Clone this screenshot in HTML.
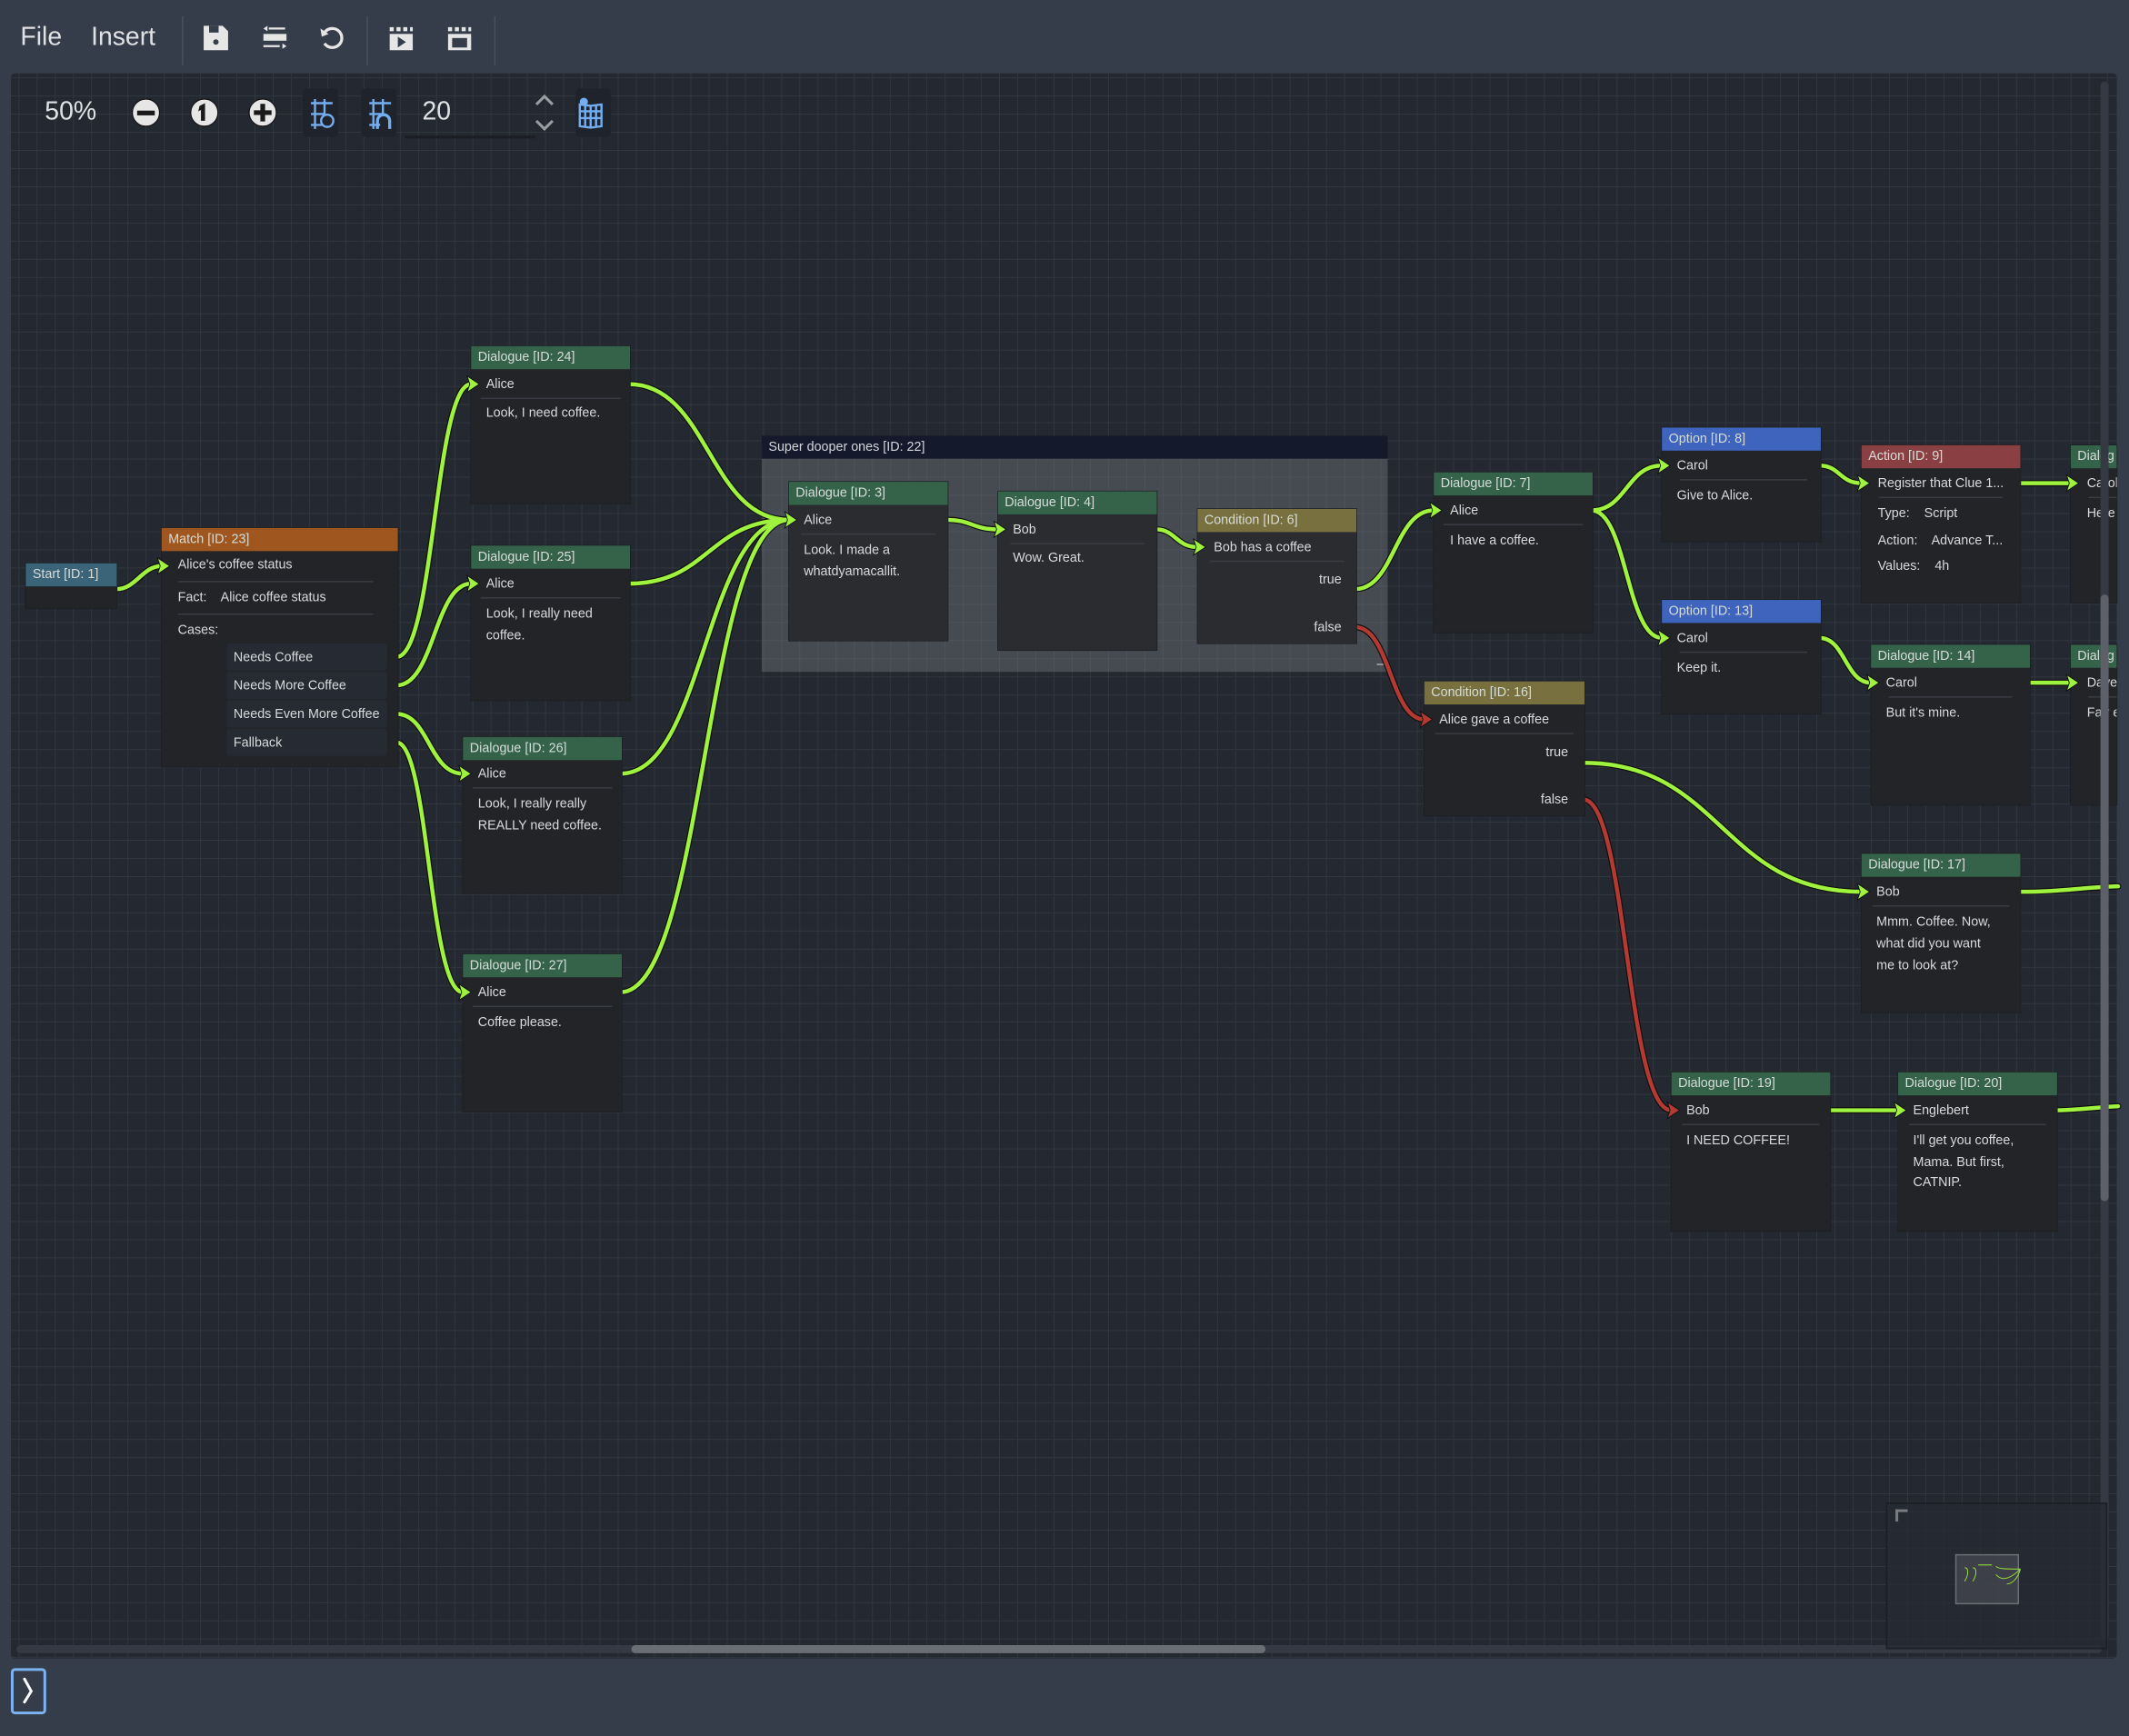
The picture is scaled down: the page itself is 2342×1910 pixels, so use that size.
<!DOCTYPE html>
<html><head><meta charset="utf-8">
<style>
*{margin:0;padding:0;box-sizing:border-box}
html,body{width:2342px;height:1910px;overflow:hidden;background:#363d4a}
#w{position:absolute;left:0;top:0;width:1568px;height:1279px;transform:scale(1.49362,1.49335);transform-origin:0 0;font-family:"Liberation Sans",sans-serif;color:#d4d6d8}
.tb{position:absolute;font-size:19px;color:#dfe1e4;top:17px}
#cv{position:absolute;left:8px;top:54px;width:1551px;height:1168px;border-radius:3px;overflow:hidden;background-color:#242830;
background-image:linear-gradient(#31363f 0.7px,transparent 0.7px),linear-gradient(90deg,#31363f 0.7px,transparent 0.7px);
background-size:13.39px 13.39px;background-position:5.6px 3px}
.n{position:absolute;background:#222428;box-shadow:0 0 0 0.5px #1c1e22}
.h{position:absolute;left:0;top:0;right:0;height:16.5px;font-size:9.6px;line-height:17.5px;padding-left:5px;color:#d6dcd8;white-space:nowrap;overflow:hidden}
.g{background:#35634a}
.t{position:absolute;font-size:9.6px;line-height:15px;white-space:nowrap;color:#d8dadc}
.s{position:absolute;height:0.8px;background:#393c42}
.cb{position:absolute;left:48px;width:118px;height:20px;background:#262a33;border-radius:2px}
svg{position:absolute;left:0;top:0}
</style></head><body><div id="w">
<div class="tb" style="left:15px">File</div>
<div class="tb" style="left:67px">Insert</div>
<svg width="1568" height="60" style="left:0;top:0">
<rect x="134" y="12" width="1" height="36" fill="#4a515e"/>
<g fill="#e6e6e6">
<path d="M150 19h14l4 4v14h-18z"/><rect x="154" y="19" width="7" height="5" fill="#363d4a"/><circle cx="159" cy="31" r="2" fill="#363d4a"/>
<rect x="194" y="25" width="17" height="5"/><path d="M198 21h12M194 34h12" stroke="#e6e6e6" stroke-width="1.5"/><path d="M194 21l3-2v4zM211 34l-3-2v4z"/>
</g>
<path d="M239 24a7 7 0 1 1 0 8" stroke="#e6e6e6" stroke-width="2.2" fill="none"/><path d="M236 21l1 6 5-2z" fill="#e6e6e6"/>
<rect x="270" y="12" width="1" height="36" fill="#4a515e"/>
<g fill="#e6e6e6"><rect x="287" y="25" width="17" height="12"/><path d="M287 20h3v3h-3zM292 20h3v3h-3zM297 20h3v3h-3zM302 20h2v3h-2z"/><path d="M293 27v8l6-4z" fill="#363d4a"/>
<rect x="330" y="25" width="17" height="12"/><path d="M330 20h3v3h-3zM335 20h3v3h-3zM340 20h3v3h-3zM345 20h2v3h-2z"/><rect x="333" y="28" width="11" height="7" fill="#363d4a"/></g>
<rect x="364" y="12" width="1" height="36" fill="#4a515e"/>
</svg>
<div id="cv">
<div style="position:absolute;left:553px;top:267px;width:461px;height:17px;background:#141a2b;font-size:9.6px;line-height:18px;padding-left:5px;color:#d4d6dc">Super dooper ones [ID: 22]</div>
<div style="position:absolute;left:553px;top:284px;width:461px;height:157px;background:rgba(120,122,128,0.42)"></div>
<div style="position:absolute;left:1006px;top:430px;width:6px;height:6px;border-right:1px solid #aaa;border-bottom:1px solid #aaa"></div>
</div>
<svg width="1568" height="1279">
<g fill="none" stroke-linecap="round">
<g stroke="#101010" stroke-width="4.6">
<path d="M86 434 C100 434,105 417,119 417"/>
<path d="M292 484 C320 484,320 283,347 283"/>
<path d="M292 505 C320 505,320 430,347 430"/>
<path d="M292 526 C316 526,316 570,341 570"/>
<path d="M292 547 C316 547,316 731,341 731"/>
<path d="M463 283 C522 283,522 383,581 383"/>
<path d="M463 430 C522 430,522 383,581 383"/>
<path d="M457 570 C519 570,519 383,581 383"/>
<path d="M457 731 C519 731,519 383,581 383"/>
<path d="M697 383 C716 383,716 390,735 390"/>
<path d="M851 390 C866 390,866 403,882 403"/>
<path d="M998 434 C1027 434,1027 376,1056 376"/>
<path d="M1172 376 C1198 376,1198 343,1224 343"/>
<path d="M1172 376 C1198 376,1198 470,1224 470"/>
<path d="M1340 343 C1355 343,1355 356,1371 356"/>
<path d="M1487 356 L1525 356"/>
<path d="M1340 470 C1359 470,1359 503,1378 503"/>
<path d="M1494 503 L1525 503"/>
<path d="M1166 562 C1268 562,1268 657,1371 657"/>
<path d="M1487 657 C1520 657,1530 654,1560 653"/>
<path d="M1347 818 L1398 818"/>
<path d="M1514 818 C1530 818,1540 816,1560 815"/>
<path d="M998 462 C1024 462,1024 530,1049 530"/>
<path d="M1166 589 C1198 589,1198 818,1231 818"/>
</g>
<g stroke="#9ff23d" stroke-width="3">
<path d="M86 434 C100 434,105 417,119 417"/>
<path d="M292 484 C320 484,320 283,347 283"/>
<path d="M292 505 C320 505,320 430,347 430"/>
<path d="M292 526 C316 526,316 570,341 570"/>
<path d="M292 547 C316 547,316 731,341 731"/>
<path d="M463 283 C522 283,522 383,581 383"/>
<path d="M463 430 C522 430,522 383,581 383"/>
<path d="M457 570 C519 570,519 383,581 383"/>
<path d="M457 731 C519 731,519 383,581 383"/>
<path d="M697 383 C716 383,716 390,735 390"/>
<path d="M851 390 C866 390,866 403,882 403"/>
<path d="M998 434 C1027 434,1027 376,1056 376"/>
<path d="M1172 376 C1198 376,1198 343,1224 343"/>
<path d="M1172 376 C1198 376,1198 470,1224 470"/>
<path d="M1340 343 C1355 343,1355 356,1371 356"/>
<path d="M1487 356 L1525 356"/>
<path d="M1340 470 C1359 470,1359 503,1378 503"/>
<path d="M1494 503 L1525 503"/>
<path d="M1166 562 C1268 562,1268 657,1371 657"/>
<path d="M1487 657 C1520 657,1530 654,1560 653"/>
<path d="M1347 818 L1398 818"/>
<path d="M1514 818 C1530 818,1540 816,1560 815"/>
</g>
<g stroke="#b23a32" stroke-width="3">
<path d="M998 462 C1024 462,1024 530,1049 530"/>
<path d="M1166 589 C1198 589,1198 818,1231 818"/>
</g>
</g>
</svg>
<div class="n" style="left:19px;top:415px;width:67px;height:33px"><div class="h" style="background:#3b6479">Start [ID: 1]</div></div>

<div class="n" style="left:119px;top:389px;width:174px;height:176px"><div class="h" style="background:#a0571f">Match [ID: 23]</div>
<div class="t" style="left:12px;top:20px">Alice's coffee status</div><div class="s" style="left:12px;right:18px;top:39px"></div>
<div class="t" style="left:12px;top:44px">Fact:&nbsp;&nbsp;&nbsp; Alice coffee status</div><div class="s" style="left:12px;right:18px;top:63px"></div>
<div class="t" style="left:12px;top:68px">Cases:</div>
<div class="cb" style="top:85px"></div><div class="cb" style="top:106px"></div><div class="cb" style="top:127px"></div><div class="cb" style="top:148px"></div>
<div class="t" style="left:53px;top:88px">Needs Coffee</div><div class="t" style="left:53px;top:109px">Needs More Coffee</div><div class="t" style="left:53px;top:130px">Needs Even More Coffee</div><div class="t" style="left:53px;top:151px">Fallback</div>
</div>

<div class="n" style="left:347px;top:255px;width:117px;height:116px"><div class="h g">Dialogue [ID: 24]</div><div class="t" style="left:11px;top:21px">Alice</div><div class="s" style="left:7px;right:7px;top:38px"></div><div class="t" style="left:11px;top:42px">Look, I need coffee.</div></div>
<div class="n" style="left:347px;top:402px;width:117px;height:114px"><div class="h g">Dialogue [ID: 25]</div><div class="t" style="left:11px;top:21px">Alice</div><div class="s" style="left:7px;right:7px;top:38px"></div><div class="t" style="left:11px;top:43px;line-height:15.5px">Look, I really need<br>coffee.</div></div>
<div class="n" style="left:341px;top:543px;width:117px;height:115px"><div class="h g">Dialogue [ID: 26]</div><div class="t" style="left:11px;top:20px">Alice</div><div class="s" style="left:7px;right:7px;top:37px"></div><div class="t" style="left:11px;top:42px;line-height:15.5px">Look, I really really<br>REALLY need coffee.</div></div>
<div class="n" style="left:341px;top:703px;width:117px;height:116px"><div class="h g">Dialogue [ID: 27]</div><div class="t" style="left:11px;top:21px">Alice</div><div class="s" style="left:7px;right:7px;top:38px"></div><div class="t" style="left:11px;top:43px">Coffee please.</div></div>

<div class="n" style="left:581px;top:355px;width:117px;height:117px;background:#2a2c30"><div class="h g">Dialogue [ID: 3]</div><div class="t" style="left:11px;top:21px">Alice</div><div class="s" style="left:9px;right:9px;top:38px"></div><div class="t" style="left:11px;top:43px;line-height:15.5px">Look. I made a<br>whatdyamacallit.</div></div>
<div class="n" style="left:735px;top:362px;width:117px;height:117px;background:#2a2c30"><div class="h g">Dialogue [ID: 4]</div><div class="t" style="left:11px;top:21px">Bob</div><div class="s" style="left:9px;right:9px;top:38px"></div><div class="t" style="left:11px;top:42px">Wow. Great.</div></div>
<div class="n" style="left:882px;top:375px;width:117px;height:99px;background:#2a2c30"><div class="h" style="background:#78713f">Condition [ID: 6]</div><div class="t" style="left:12px;top:21px">Bob has a coffee</div><div class="s" style="left:9px;right:9px;top:38px"></div><div class="t" style="right:11px;top:45px">true</div><div class="t" style="right:11px;top:80px">false</div></div>

<div class="n" style="left:1056px;top:348px;width:117px;height:118px"><div class="h g">Dialogue [ID: 7]</div><div class="t" style="left:12px;top:21px">Alice</div><div class="s" style="left:7px;right:7px;top:38px"></div><div class="t" style="left:12px;top:43px">I have a coffee.</div></div>
<div class="n" style="left:1049px;top:502px;width:118px;height:99px"><div class="h" style="background:#78713f">Condition [ID: 16]</div><div class="t" style="left:11px;top:21px">Alice gave a coffee</div><div class="s" style="left:8px;right:8px;top:38px"></div><div class="t" style="right:12px;top:45px">true</div><div class="t" style="right:12px;top:80px">false</div></div>

<div class="n" style="left:1224px;top:315px;width:117px;height:84px"><div class="h" style="background:#3f64bd">Option [ID: 8]</div><div class="t" style="left:11px;top:21px">Carol</div><div class="s" style="left:13px;right:10px;top:38px"></div><div class="t" style="left:11px;top:43px">Give to Alice.</div></div>
<div class="n" style="left:1224px;top:442px;width:117px;height:84px"><div class="h" style="background:#3f64bd">Option [ID: 13]</div><div class="t" style="left:11px;top:21px">Carol</div><div class="s" style="left:13px;right:10px;top:38px"></div><div class="t" style="left:11px;top:43px">Keep it.</div></div>
<div class="n" style="left:1371px;top:328px;width:117px;height:116px"><div class="h" style="background:#8a4042">Action [ID: 9]</div><div class="t" style="left:12px;top:21px">Register that Clue 1...</div><div class="s" style="left:13px;right:13px;top:38px"></div><div class="t" style="left:12px;top:43px">Type:&nbsp;&nbsp;&nbsp; Script</div><div class="t" style="left:12px;top:63px">Action:&nbsp;&nbsp;&nbsp; Advance T...</div><div class="t" style="left:12px;top:82px">Values:&nbsp;&nbsp;&nbsp; 4h</div></div>
<div class="n" style="left:1525px;top:328px;width:34px;height:116px;overflow:hidden"><div class="h g">Dialog</div><div class="t" style="left:12px;top:21px">Carol</div><div class="s" style="left:13px;right:0;top:38px"></div><div class="t" style="left:12px;top:43px">Here</div></div>
<div class="n" style="left:1378px;top:475px;width:117px;height:118px"><div class="h g">Dialogue [ID: 14]</div><div class="t" style="left:11px;top:21px">Carol</div><div class="s" style="left:13px;right:13px;top:38px"></div><div class="t" style="left:11px;top:43px">But it's mine.</div></div>
<div class="n" style="left:1525px;top:475px;width:34px;height:118px;overflow:hidden"><div class="h g">Dialog</div><div class="t" style="left:12px;top:21px">Dave</div><div class="s" style="left:13px;right:0;top:38px"></div><div class="t" style="left:12px;top:43px">Fair e</div></div>
<div class="n" style="left:1371px;top:629px;width:117px;height:117px"><div class="h g">Dialogue [ID: 17]</div><div class="t" style="left:11px;top:21px">Bob</div><div class="s" style="left:8px;right:8px;top:38px"></div><div class="t" style="left:11px;top:43px;line-height:16px">Mmm. Coffee. Now,<br>what did you want<br>me to look at?</div></div>
<div class="n" style="left:1231px;top:790px;width:117px;height:117px"><div class="h g">Dialogue [ID: 19]</div><div class="t" style="left:11px;top:21px">Bob</div><div class="s" style="left:8px;right:8px;top:38px"></div><div class="t" style="left:11px;top:43px">I NEED COFFEE!</div></div>
<div class="n" style="left:1398px;top:790px;width:117px;height:117px"><div class="h g">Dialogue [ID: 20]</div><div class="t" style="left:11px;top:21px">Englebert</div><div class="s" style="left:8px;right:8px;top:38px"></div><div class="t" style="left:11px;top:43px;line-height:15.5px">I'll get you coffee,<br>Mama. But first,<br>CATNIP.</div></div>

<!-- arrowheads on top -->
<svg width="1568" height="1279">
<g fill="#9ff23d" stroke="#101010" stroke-width="0.6">
<path d="M116 411l9 6-9 6 2-6z"/>
<path d="M344 277l9 6-9 6 2-6z"/><path d="M344 424l9 6-9 6 2-6z"/><path d="M338 564l9 6-9 6 2-6z"/><path d="M338 725l9 6-9 6 2-6z"/>
<path d="M578 377l9 6-9 6 2-6z"/><path d="M732 384l9 6-9 6 2-6z"/><path d="M879 397l9 6-9 6 2-6z"/><path d="M1053 370l9 6-9 6 2-6z"/>
<path d="M1221 337l9 6-9 6 2-6z"/><path d="M1221 464l9 6-9 6 2-6z"/><path d="M1368 350l9 6-9 6 2-6z"/><path d="M1522 350l9 6-9 6 2-6z"/>
<path d="M1375 497l9 6-9 6 2-6z"/><path d="M1522 497l9 6-9 6 2-6z"/><path d="M1368 651l9 6-9 6 2-6z"/><path d="M1395 812l9 6-9 6 2-6z"/>
</g>
<g fill="#b23a32" stroke="#101010" stroke-width="0.6"><path d="M1046 524l9 6-9 6 2-6z"/><path d="M1228 812l9 6-9 6 2-6z"/></g>
</svg>

<div style="position:absolute;left:33px;top:72px;font-size:19px;color:#dfe1e4">50%</div>
<svg width="1568" height="120">
<g fill="#e6e6e6" stroke="#111" stroke-width="0.8">
<circle cx="107.5" cy="83" r="10"/><circle cx="150.5" cy="83" r="10"/><circle cx="193.5" cy="83" r="10"/></g>
<rect x="101" y="81.5" width="13" height="3.5" fill="#1a1a1a"/>
<path d="M147 78l4-2v13h-3v-8l-2 1z" fill="#1a1a1a"/>
<path d="M187 83h13M193.5 76.5v13" stroke="#1a1a1a" stroke-width="3.5"/>
<rect x="223" y="65" width="26" height="36" rx="3" fill="#1f232b"/>
<rect x="266" y="65" width="26" height="36" rx="3" fill="#1f232b"/>
<rect x="424" y="65" width="26" height="36" rx="3" fill="#1f232b"/>
<g stroke="#74aef0" stroke-width="1.6" fill="none">
<path d="M229 76h16M229 84h10M229 92h8M232 73v22M239 73v12"/><circle cx="241" cy="89" r="4.5"/>
<path d="M272 76h16M272 84h10M272 92h8M275 73v22M282 73v12"/><path d="M278 95v-6a4.5 4.5 0 0 1 9 0v6" stroke-width="2.2"/>
<path d="M427 77l8 1 8-1v16l-8 1-8-1zM427 82h16M427 87h16M431 77v16M435 78v16M439 77v16"/>
</g>
<circle cx="430" cy="75" r="3" fill="#74aef0"/>
<rect x="298" y="100" width="96" height="2" fill="#1a1d23"/>
<path d="M395 77l6-6 6 6M395 89l6 6 6-6" stroke="#9a9da3" stroke-width="2" fill="none"/>
</svg>
<div style="position:absolute;left:311px;top:72px;font-size:19px;color:#dfe1e4">20</div>

<div style="position:absolute;left:12px;top:1212px;width:1536px;height:6px;border-radius:3px;background:#353943"></div>
<div style="position:absolute;left:465px;top:1212px;width:467px;height:6px;border-radius:3px;background:#6a6d74"></div>
<div style="position:absolute;left:1547px;top:60px;width:6px;height:1148px;border-radius:3px;background:#353943"></div>
<div style="position:absolute;left:1547px;top:438px;width:6px;height:447px;border-radius:3px;background:#5d6068"></div>

<div style="position:absolute;left:1389px;top:1107px;width:163px;height:108px;background:rgba(38,42,50,0.75);border:0.7px solid #1b1e24"></div>
<div style="position:absolute;left:1396px;top:1112px;width:9px;height:9px;border-left:2.4px solid #7a7c80;border-top:2.4px solid #7a7c80"></div>
<div style="position:absolute;left:1440px;top:1145px;width:47px;height:37px;background:rgba(90,94,102,0.45);border:0.7px solid #6b6e74"></div>
<svg width="1568" height="1279"><g stroke="#8fd83a" stroke-width="0.7" fill="none">
<path d="M1447 1155c3 0 3 5 0 10M1453 1155c3 0 3 5 0 10M1457 1153h10M1470 1154c2 2 8 2 18 2M1470 1160c5 6 12 2 18-4M1478 1167c4 0 8-4 10-11"/></g></svg>

<div style="position:absolute;left:8px;top:1229px;width:26px;height:34px;border:2px solid #7bb3f2;border-radius:3px"></div>
<svg width="1568" height="1279"><path d="M18 1237l5 9-5 8" stroke="#fff" stroke-width="2" fill="none" stroke-linecap="round"/></svg>
</div></body></html>
